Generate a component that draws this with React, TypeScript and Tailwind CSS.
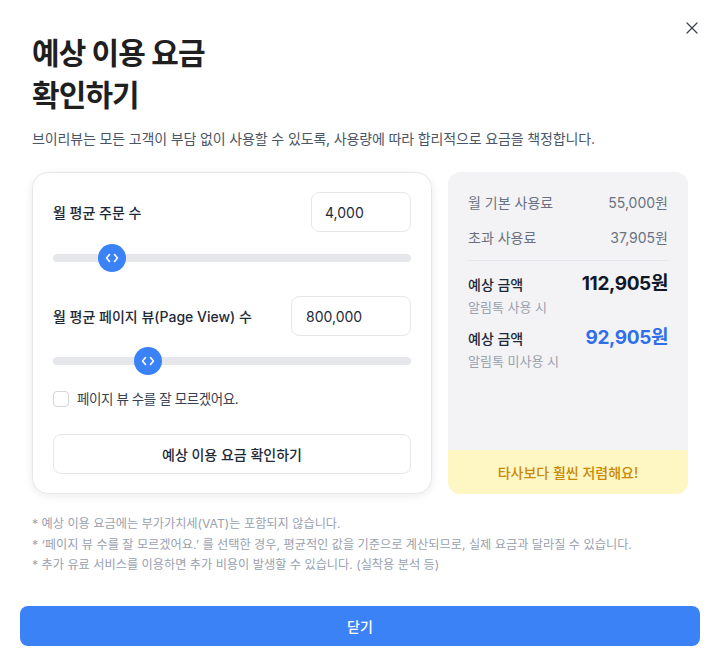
import { useState } from "react";

// Pricing estimate modal: inputs on the left, estimated cost summary on the right.

function RangeSlider({ value, max, onChange }: { value: number; max: number; onChange: (v: number) => void }) {
  const pct = (value / max) * 100;
  return (
    <div className="relative h-7 flex items-center">
      <div className="w-full h-2 rounded-full bg-gray-200" />
      <div
        className="absolute top-0 w-7 h-7 -ml-3.5 rounded-full bg-[#3b82f6] flex items-center justify-center text-white"
        style={{ left: `${pct}%` }}
      >
        <svg width="14" height="10" viewBox="0 0 14 10" fill="none" stroke="currentColor" strokeWidth="1.6" strokeLinecap="round" strokeLinejoin="round">
          <path d="M4.5 1.5 1.5 5l3 3.5" />
          <path d="M9.5 1.5 12.5 5l-3 3.5" />
        </svg>
      </div>
      <input
        type="range"
        min={0}
        max={max}
        value={value}
        onChange={(e) => onChange(Number(e.target.value))}
        className="absolute inset-0 w-full opacity-0 cursor-pointer"
      />
    </div>
  );
}

export default function App() {
  const [orders, setOrders] = useState(4000);
  const [views, setViews] = useState(800000);
  const [unknownViews, setUnknownViews] = useState(false);

  return (
    <div
      className="w-[720px] h-[662px] bg-white relative px-8 pt-[32px] text-gray-900"
      style={{ fontFamily: 'Inter, "Noto Sans CJK KR", sans-serif' }}
    >
      <button className="absolute top-[22px] right-[22px] text-gray-700">
        <svg width="12" height="12" viewBox="0 0 12 12" stroke="currentColor" strokeWidth="1.2" strokeLinecap="round">
          <path d="M1 1l10 10M11 1 1 11" />
        </svg>
      </button>

      <h1 className="text-[30px] font-bold leading-[42px] tracking-[-0.03em] text-[#1f1f1f]">
        예상 이용 요금
        <br />
        확인하기
      </h1>
      <p className="mt-[13px] text-[14px] leading-5 text-gray-600 tracking-[-0.01em]">
        브이리뷰는 모든 고객이 부담 없이 사용할 수 있도록, 사용량에 따라 합리적으로 요금을 책정합니다.
      </p>

      <div className="mt-[23px] flex gap-4">
        {/* Inputs */}
        <div className="w-[400px] h-[322px] rounded-2xl border border-gray-200 shadow-[0_2px_8px_rgba(0,0,0,0.08)] px-5 pt-[19px]">
          <div className="flex items-center justify-between">
            <span className="text-[14px] font-medium text-gray-800">월 평균 주문 수</span>
            <input
              value={orders.toLocaleString()}
              onChange={(e) => setOrders(Number(e.target.value.replace(/\D/g, "")) || 0)}
              className="w-[100px] h-10 rounded-lg border border-gray-200 px-[13px] text-[14px] text-gray-800 outline-none"
            />
          </div>
          <div className="mt-[12px]">
            <RangeSlider value={orders} max={24400} onChange={setOrders} />
          </div>

          <div className="mt-[24px] flex items-center justify-between">
            <span className="text-[14px] font-medium text-gray-800">월 평균 페이지 뷰(Page View) 수</span>
            <input
              value={views.toLocaleString()}
              onChange={(e) => setViews(Number(e.target.value.replace(/\D/g, "")) || 0)}
              className="w-[120px] h-10 rounded-lg border border-gray-200 px-[14px] text-[14px] text-gray-800 outline-none"
            />
          </div>
          <div className="mt-[11px]">
            <RangeSlider value={views} max={3030000} onChange={setViews} />
          </div>

          <label className="mt-[14px] h-5 flex items-center gap-[8px] cursor-pointer">
            <input
              type="checkbox"
              checked={unknownViews}
              onChange={(e) => setUnknownViews(e.target.checked)}
              className="appearance-none w-4 h-4 rounded border border-gray-300 bg-white checked:bg-[#3b82f6]"
            />
            <span className="text-[13.5px] text-gray-700 tracking-[-0.03em]">페이지 뷰 수를 잘 모르겠어요.</span>
          </label>

          <button className="mt-[25px] w-full h-10 rounded-lg border border-gray-200 text-[14px] font-medium text-gray-800">
            예상 이용 요금 확인하기
          </button>
        </div>

        {/* Summary */}
        <div className="w-[240px] h-[322px] rounded-xl bg-[#f3f3f5] flex flex-col overflow-hidden">
          <div className="flex-1 px-5 pt-[21px]">
            <div className="flex justify-between text-[14px] leading-5 text-gray-500">
              <span>월 기본 사용료</span>
              <span>55,000원</span>
            </div>
            <div className="mt-[15px] flex justify-between text-[14px] leading-5 text-gray-500">
              <span>초과 사용료</span>
              <span>37,905원</span>
            </div>
            <div className="mt-[12px] border-t border-gray-200" />
            <div className="mt-[9px] h-7 flex justify-between items-center">
              <span className="text-[14px] font-medium text-gray-800">예상 금액</span>
              <span className="text-[19px] font-bold tracking-[-0.02em] text-gray-900">112,905원</span>
            </div>
            <p className="text-[13px] leading-[18px] text-gray-400">알림톡 사용 시</p>
            <div className="mt-[8px] h-7 flex justify-between items-center">
              <span className="text-[14px] font-medium text-gray-800">예상 금액</span>
              <span className="text-[19px] font-bold tracking-[-0.02em] text-[#2f6fec]">92,905원</span>
            </div>
            <p className="text-[13px] leading-[18px] text-gray-400">알림톡 미사용 시</p>
          </div>
          <div className="h-11 bg-[#fef7c3] flex items-center justify-center text-[14px] font-medium text-[#ca8a04]">
            타사보다 훨씬 저렴해요!
          </div>
        </div>
      </div>

      <ul className="mt-[21px] space-y-[3px] text-[12.2px] text-gray-400 leading-[17.5px]">
        <li>* 예상 이용 요금에는 부가가치세(VAT)는 포함되지 않습니다.</li>
        <li>* ‘페이지 뷰 수를 잘 모르겠어요.’ 를 선택한 경우, 평균적인 값을 기준으로 계산되므로, 실제 요금과 달라질 수 있습니다.</li>
        <li>* 추가 유료 서비스를 이용하면 추가 비용이 발생할 수 있습니다. (실착용 분석 등)</li>
      </ul>

      <button className="absolute left-5 right-5 bottom-4 h-10 rounded-lg bg-[#3b82f6] text-white text-[14px] font-medium">
        닫기
      </button>
    </div>
  );
}
